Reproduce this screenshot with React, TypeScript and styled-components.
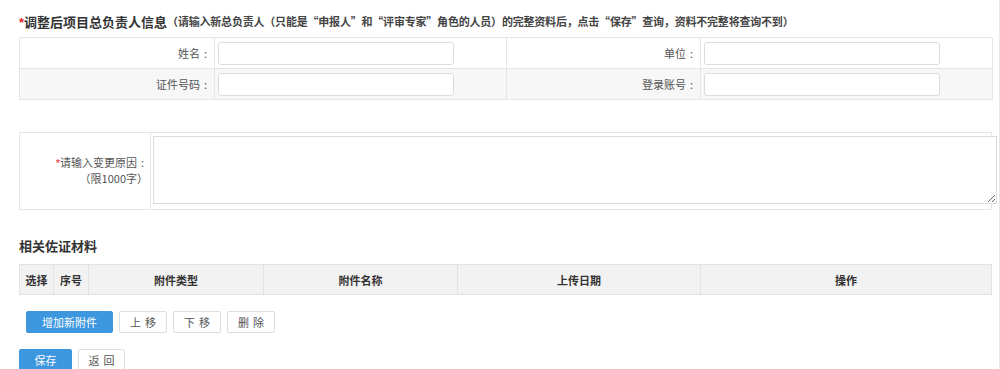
import React, { useState } from 'react';
import styled, { createGlobalStyle } from 'styled-components';

const GlobalStyle = createGlobalStyle`
  body {
    margin: 0;
    background: #fff;
    font-family: "Noto Sans CJK SC", "Liberation Sans", sans-serif;
    font-size: 11px;
    color: #555;
  }
  * { box-sizing: border-box; }
`;

const Page = styled.div`
  width: 1000px;
  min-height: 369px;
  padding: 11px 0 0 19px;
  border-right: 1px solid #e8e8e8;
`;

const Title = styled.div`
  height: 20px;
  display: flex;
  align-items: center;
  margin-bottom: 6px;
  white-space: nowrap;
`;

const Star = styled.span`
  color: #e02a2a;
  font-family: "Liberation Sans", sans-serif;
`;

// colon centred in a full-width box, as in the original page
const Colon = styled.span`
  display: inline-block;
  width: 1em;
  text-align: center;
`;

const TitleMain = styled.span`
  font-size: 13px;
  font-weight: 700;
  color: #333;
`;

const TitleNote = styled.span`
  font-size: 11px;
  font-weight: 700;
  color: #444;
  letter-spacing: -0.2px;
`;

const InfoGrid = styled.div`
  width: 973px;
  display: grid;
  grid-template-columns: 195px 292px 194px 292px;
  border-top: 1px solid #e6e6e6;
  border-left: 1px solid #e6e6e6;
`;

const Cell = styled.div<{ $alt?: boolean; $label?: boolean }>`
  height: 31px;
  display: flex;
  align-items: center;
  justify-content: ${({ $label }) => ($label ? 'flex-end' : 'flex-start')};
  padding: ${({ $label }) => ($label ? '0 3px 0 0' : '0 0 0 3px')};
  border-right: 1px solid #e6e6e6;
  border-bottom: 1px solid #e6e6e6;
  background: ${({ $alt }) => ($alt ? '#f7f7f7' : '#fff')};
  color: #555;
`;

const TextInput = styled.input`
  width: 236px;
  height: 23px;
  border: 1px solid #dcdcdc;
  border-radius: 3px;
  background: #fff;
  outline: none;
  padding: 0 6px;
  font: inherit;
`;

const ReasonGrid = styled.div`
  width: 973px;
  margin-top: 32px;
  display: grid;
  grid-template-columns: 131px 1fr;
  border: 1px solid #e6e6e6;
`;

const ReasonLabel = styled.div`
  height: 76px;
  border-right: 1px solid #e6e6e6;
  display: flex;
  flex-direction: column;
  justify-content: center;
  align-items: flex-end;
  padding: 0 2px 2px 0;
  line-height: 15px;
  text-align: right;
`;

const ReasonCell = styled.div`
  padding: 3px 0 0 2px;
`;

const ReasonArea = styled.textarea`
  display: block;
  width: 844px;
  height: 68px;
  border: 1px solid #dcdcdc;
  outline: none;
  font: inherit;
`;

const SectionTitle = styled.div`
  margin-top: 25px;
  height: 20px;
  display: flex;
  align-items: center;
  font-size: 13px;
  font-weight: 700;
  color: #333;
`;

const AttachHead = styled.div`
  width: 973px;
  margin-top: 9px;
  display: grid;
  grid-template-columns: 34px 35px 175px 194px 243px 1fr;
  border: 1px solid #e3e3e3;
  background: #f2f2f2;
`;

const HeadCell = styled.div`
  height: 29px;
  display: flex;
  align-items: center;
  justify-content: center;
  font-weight: 700;
  color: #333;
  border-right: 1px solid #e3e3e3;
  &:last-child { border-right: none; }
`;

const BtnRow = styled.div<{ $indent?: number }>`
  display: flex;
  gap: 6px;
  padding-left: ${({ $indent }) => $indent ?? 0}px;
  margin-top: 16px;
`;

const Btn = styled.button<{ $primary?: boolean; $w: number; $spaced?: boolean }>`
  width: ${({ $w }) => $w}px;
  height: 22px;
  border-radius: 2px;
  border: 1px solid ${({ $primary }) => ($primary ? '#3d97df' : '#dedede')};
  background: ${({ $primary }) => ($primary ? '#3d97df' : '#fff')};
  color: ${({ $primary }) => ($primary ? '#fff' : '#555')};
  font: inherit;
  font-size: 11px;
  letter-spacing: ${({ $spaced }) => ($spaced ? '4px' : '0')};
  text-indent: ${({ $spaced }) => ($spaced ? '4px' : '0')};
  padding: 0;
  cursor: pointer;
`;

const fields = [
  ['姓名', '单位'],
  ['证件号码', '登录账号'],
];

const heads = ['选择', '序号', '附件类型', '附件名称', '上传日期', '操作'];

export default function App() {
  const [reason, setReason] = useState('');
  return (
    <Page lang="zh-CN">
      <GlobalStyle />
      <Title>
        <TitleMain>
          <Star>*</Star>调整后项目总负责人信息
        </TitleMain>
        <TitleNote>
          （请输入新总负责人（只能是“申报人”和“评审专家”角色的人员）的完整资料后，点击“保存”查询，资料不完整将查询不到）
        </TitleNote>
      </Title>

      <InfoGrid>
        {fields.map((row, i) => (
          <React.Fragment key={i}>
            <Cell $label $alt={i === 1}>
              {row[0]}
              <Colon>:</Colon>
            </Cell>
            <Cell $alt={i === 1}>
              <TextInput />
            </Cell>
            <Cell $label $alt={i === 1}>
              {row[1]}
              <Colon>:</Colon>
            </Cell>
            <Cell $alt={i === 1}>
              <TextInput />
            </Cell>
          </React.Fragment>
        ))}
      </InfoGrid>

      <ReasonGrid>
        <ReasonLabel>
          <div>
            <Star>*</Star>请输入变更原因<Colon>:</Colon>
          </div>
          <div>（限1000字）</div>
        </ReasonLabel>
        <ReasonCell>
          <ReasonArea value={reason} onChange={(e) => setReason(e.target.value)} />
        </ReasonCell>
      </ReasonGrid>

      <SectionTitle>相关佐证材料</SectionTitle>
      <AttachHead>
        {heads.map((h) => (
          <HeadCell key={h}>{h}</HeadCell>
        ))}
      </AttachHead>

      <BtnRow $indent={7}>
        <Btn $primary $w={87}>增加新附件</Btn>
        <Btn $w={48} $spaced>上移</Btn>
        <Btn $w={48} $spaced>下移</Btn>
        <Btn $w={48} $spaced>删除</Btn>
      </BtnRow>
      <BtnRow>
        <Btn $primary $w={53}>保存</Btn>
        <Btn $w={47} $spaced>返回</Btn>
      </BtnRow>
    </Page>
  );
}
